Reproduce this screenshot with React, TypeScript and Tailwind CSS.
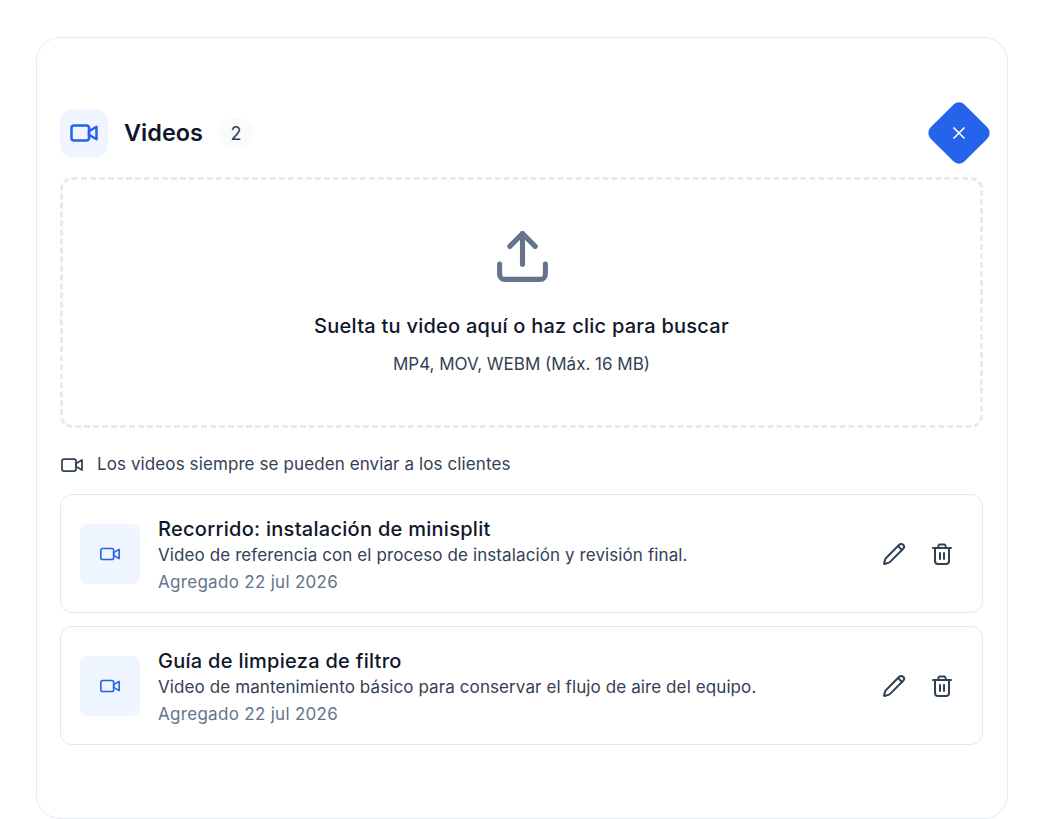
import { Upload, X } from 'lucide-react';

const videos = [
  {
    title: 'Recorrido: instalación de minisplit',
    description: 'Video de referencia con el proceso de instalación y revisión final.',
    added: 'Agregado 22 jul 2026',
  },
  {
    title: 'Guía de limpieza de filtro',
    description: 'Video de mantenimiento básico para conservar el flujo de aire del equipo.',
    added: 'Agregado 22 jul 2026',
  },
];

function VideoIcon({ size, strokeWidth = 2 }: { size: number; strokeWidth?: number }) {
  return (
    <svg width={size} height={size} viewBox="0 0 24 24" fill="none" stroke="currentColor" strokeWidth={strokeWidth} strokeLinecap="round" strokeLinejoin="round">
      <rect x="2" y="6" width="14" height="12" rx="2" />
      <path d="m16 10.5 6-3.5v10l-6-3.5z" />
    </svg>
  );
}

function PencilIcon() {
  return (
    <svg width="24" height="24" viewBox="0 0 24 24" fill="none" stroke="currentColor" strokeWidth="2" strokeLinecap="round" strokeLinejoin="round">
      <path d="M21.174 6.812a1 1 0 0 0-3.986-3.987L3.842 16.174a2 2 0 0 0-.5.83l-1.321 4.352a.5.5 0 0 0 .623.622l4.353-1.32a2 2 0 0 0 .83-.497z" />
      <path d="m16 4 4 4" />
    </svg>
  );
}

function TrashIcon() {
  return (
    <svg width="24" height="24" viewBox="0 0 24 24" fill="none" stroke="currentColor" strokeWidth="2" strokeLinecap="round" strokeLinejoin="round">
      <path d="M3 6h18" />
      <path d="M19 6v13a3 3 0 0 1-3 3H8a3 3 0 0 1-3-3V6" />
      <path d="m8 6 .6-2.6a1 1 0 0 1 1-.8h4.8a1 1 0 0 1 1 .8L16 6" />
      <path d="M10 11v6" />
      <path d="M14 11v6" />
    </svg>
  );
}

function VideoRow({ title, description, added }: (typeof videos)[number]) {
  return (
    <div className="flex h-[119px] items-center rounded-xl border border-[#e4e9ee] bg-white pl-[19px] pr-[28px]">
      <div className="flex h-[60px] w-[60px] shrink-0 items-center justify-center rounded-lg bg-[#eff6ff] text-[#2563eb]">
        <VideoIcon size={22} strokeWidth={1.75} />
      </div>
      <div className="ml-[18px] mt-[2px] min-w-0 flex-1">
        <div className="text-[20px] leading-[28px] font-medium tracking-[0.28px] text-[#0f172a]">{title}</div>
        <div className="text-[17px] leading-[24px] tracking-[0.1px] text-[#334155]">{description}</div>
        <div className="mt-[3px] text-[17px] leading-[24px] tracking-[0.3px] text-[#64748b]">{added}</div>
      </div>
      <div className="flex items-center gap-[24px] text-[#334155]">
        <PencilIcon />
        <TrashIcon />
      </div>
    </div>
  );
}

export default function App() {
  return (
    <div className="min-h-[819px] bg-white pl-9 pr-9 pt-[37px] font-['Inter',sans-serif]">
      <div className="h-[782px] w-[972px] rounded-3xl border border-[#e6ebef] pl-[23px] pr-6 pt-[71px]">
        <div className="flex h-12 items-center justify-between">
          <div className="flex items-center">
            <div className="flex h-12 w-12 items-center justify-center rounded-xl bg-[#eff6ff] text-[#2563eb]">
              <VideoIcon size={30} />
            </div>
            <h2 className="ml-4 text-[23.5px] font-semibold text-[#0f172a]">Videos</h2>
            <span className="ml-4 flex h-[30px] w-[34px] items-center justify-center rounded-full bg-[#f8fafc] text-[18px] text-[#334155]">2</span>
          </div>
          <button className="flex h-12 w-12 rotate-45 items-center justify-center rounded-lg bg-[#2563eb] text-white">
            <X size={20} strokeWidth={2} className="-rotate-45" />
          </button>
        </div>

        <div className="mt-5 flex h-[251px] flex-col items-center rounded-xl border-[3px] border-dashed border-[#e6ebf1] pt-[46px]">
          <Upload size={61} strokeWidth={2} className="ml-[2px] text-[#64748b]" />
          <div className="mt-[25px] text-[20px] leading-[28px] font-medium tracking-[0.25px] text-[#0f172a]">Suelta tu video aquí o haz clic para buscar</div>
          <div className="mt-[12px] text-[17px] leading-[24px] text-[#334155]">MP4, MOV, WEBM (Máx. 16 MB)</div>
        </div>

        <div className="mt-[25px] flex h-6 items-center gap-[13px] text-[17px] tracking-[0.1px] text-[#334155]">
          <VideoIcon size={24} strokeWidth={1.75} />
          <span>Los videos siempre se pueden enviar a los clientes</span>
        </div>

        <div className="mt-[17px] flex flex-col gap-[13px]">
          {videos.map((video) => (
            <VideoRow key={video.title} {...video} />
          ))}
        </div>
      </div>
    </div>
  );
}
